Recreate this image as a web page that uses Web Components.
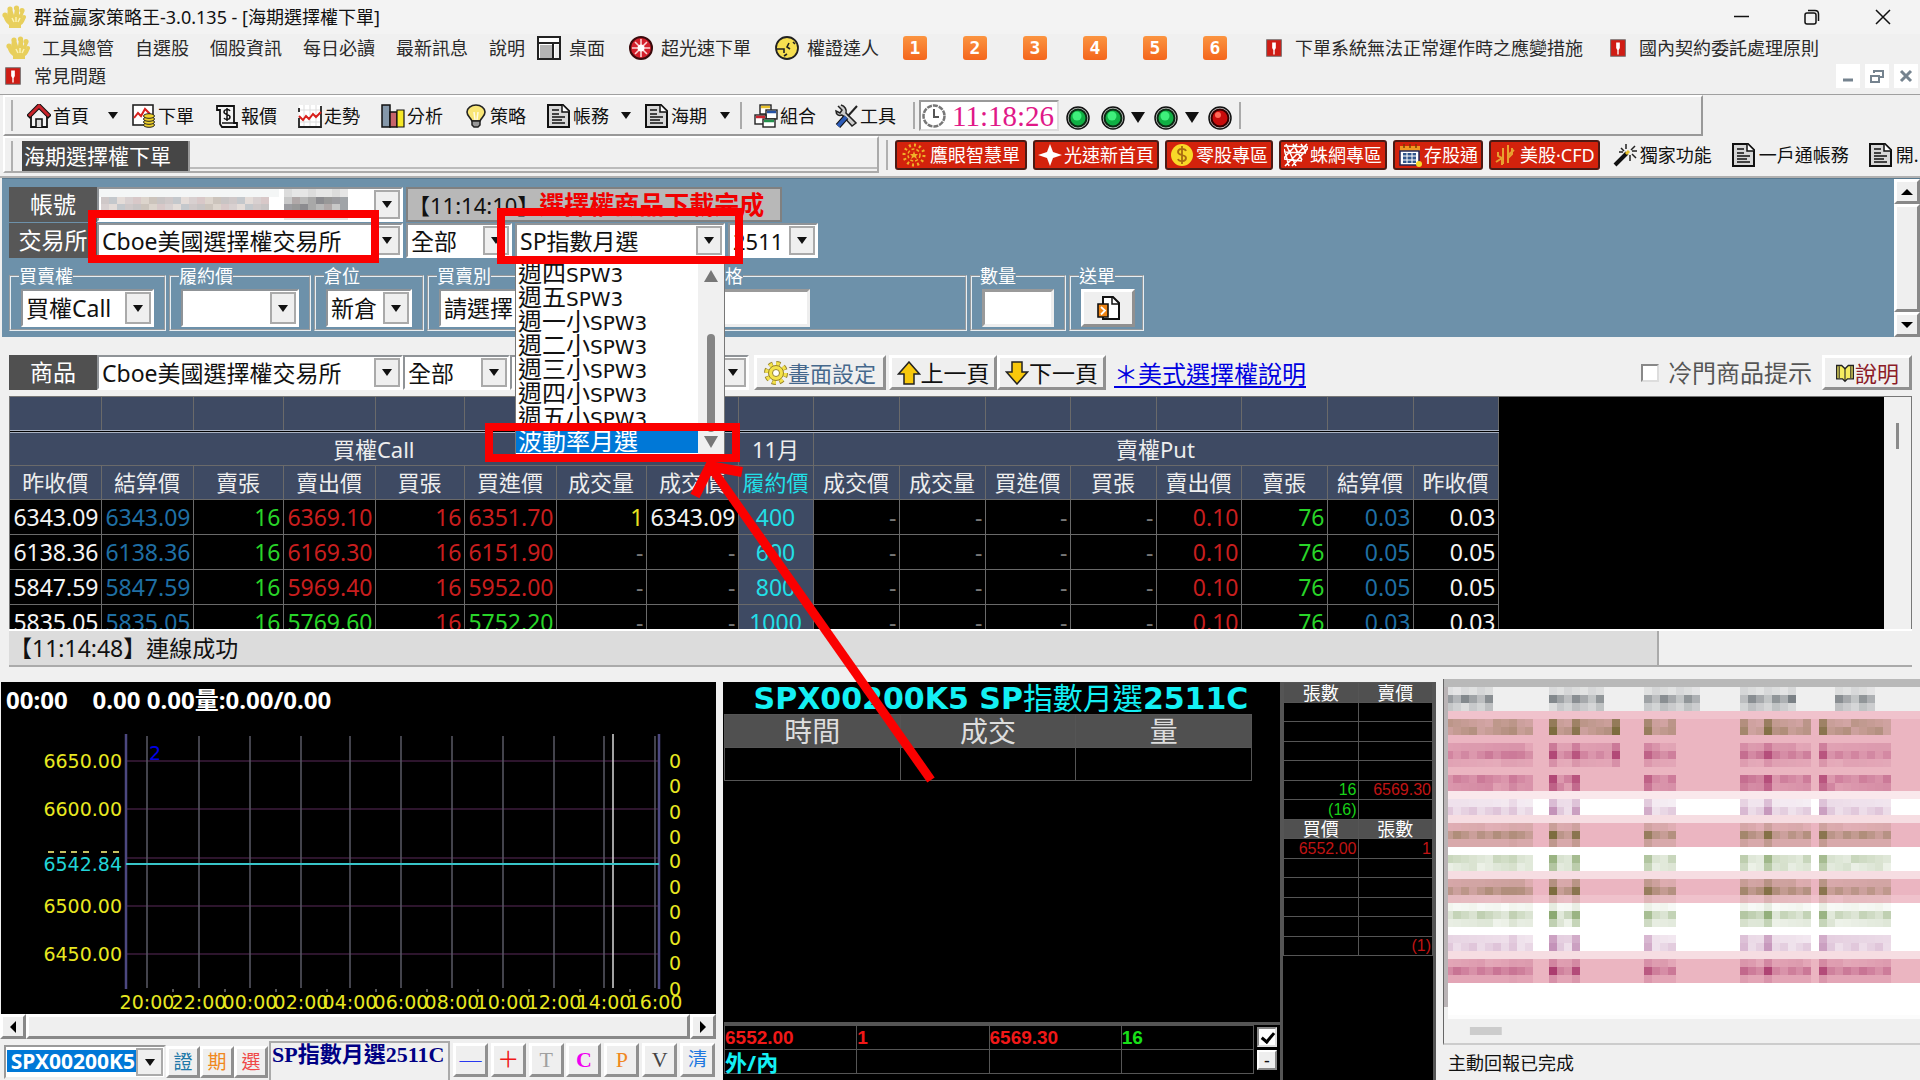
<!DOCTYPE html>
<html lang="zh-Hant">
<head>
<meta charset="utf-8">
<title>群益贏家策略王</title>
<style>
html,body{margin:0;height:100%}
body{background:#f0f0f0;color:#111;font-family:"Noto Sans","Noto Sans CJK TC",sans-serif;font-size:18px;line-height:24px;overflow:hidden}
</style>
</head>
<body>
<trade-app></trade-app>
<script>
const BASE = `*{box-sizing:border-box}button,input,select{font:inherit;color:inherit;margin:0;border-radius:0}button{background:none;border:0;padding:0;line-height:inherit;white-space:nowrap}`;
function define(name, css, html, ready) {
  const t = document.createElement('template');
  t.innerHTML = `<style>${BASE}${css}</style>${typeof html === 'string' ? html : ''}`;
  customElements.define(name, class extends HTMLElement {
    constructor() { super(); this.attachShadow({ mode: 'open' }); }
    connectedCallback() {
      if (this.shadowRoot.firstChild) return;
      this.shadowRoot.append(t.content.cloneNode(true));
      if (typeof html === 'function') this.shadowRoot.innerHTML += html(this);
      if (ready) ready(this, this.shadowRoot);
    }
  });
}

/* ---------- icons ---------- */
const doc = '<path d="M1 1h15l6 6v16H1z" fill="#d8d8d8" stroke="#111" stroke-width="2"/><path d="M15 1v7h7" fill="#fff" stroke="#111" stroke-width="1.5"/><path d="M5 6h7M5 10h7M5 13h13M5 16h10M5 19h13" stroke="#111" stroke-width="1.6"/>';
const crown = '<g fill="#e8cf5c"><circle cx="3" cy="10" r="2.600"/><circle cx="8" cy="4" r="2.600"/><circle cx="14.500" cy="3" r="2.600"/><circle cx="20" cy="5.500" r="2.600"/><circle cx="22" cy="12" r="2"/><path d="M1 10l4 1L6 4h4l2 6 1-7h4l0 7 3-5 2 2-2 6 4-2c-1 5-3 8-5 9H7c-4-3-5-6-6-11zM7 20h12v3H7z"/></g><path d="M10 13l2 4M14 12v5M18 13l-2 4" stroke="#fbf2b4" stroke-width="1.500"/>';
const ICONS = {
  crown,
  desk: '<rect x="1" y="1" width="22" height="22" fill="#fff" stroke="#222" stroke-width="2"/><path d="M1 7h22M16 7v16" stroke="#222" stroke-width="2"/><path d="M3 9h12v13H3z" fill="#b4b4b4"/><path d="M18 9h4v13h-4z" fill="#eee"/>',
  burst: '<circle cx="12" cy="12" r="11" fill="#d3202c" stroke="#3a0a0c" stroke-width="2"/><path d="M12 3v18M3 12h18M6 6l12 12M18 6L6 18" stroke="#fbd5d5" stroke-width="1.600"/><circle cx="12" cy="12" r="3.500" fill="#fff"/>',
  face: '<circle cx="12" cy="12" r="11" fill="#f7df50" stroke="#222" stroke-width="1.800"/><path d="M2 13h7v4M14 7l-2 4 3 2M18 6l2 2M9 20l3-2" stroke="#222" stroke-width="1.600" fill="none"/>',
  flag: '<rect x="4" y="3" width="16" height="18" fill="#d01c14" stroke="#6b6b6b"/><path d="M10 6h4v6l-1 2h-2l-1-2z" fill="#fff"/><path d="M12 12v7" stroke="#fff" stroke-width="1.500"/>',
  home: '<path d="M4 12v11h16V12" fill="#f4f4f4" stroke="#111" stroke-width="1.800"/><path d="M1 13L12 2l11 11" fill="none" stroke="#111" stroke-width="5"/><path d="M2 12L12 2l10 10" fill="none" stroke="#c9242b" stroke-width="3"/><path d="M9 23v-8h6v8" fill="#ddd" stroke="#111" stroke-width="1.600"/>',
  order: '<rect x="1" y="1" width="20" height="20" fill="#fff" stroke="#222" stroke-width="1.600"/><path d="M2 14l4-5 3 3 4-7 5 5" fill="none" stroke="#d8201c" stroke-width="2"/><g fill="#f0d22c" stroke="#222"><ellipse cx="17" cy="21" rx="5.500" ry="2.300"/><ellipse cx="17" cy="18" rx="5.500" ry="2.300"/><ellipse cx="17" cy="15" rx="5.500" ry="2.300"/><ellipse cx="17" cy="12" rx="5.500" ry="2.300"/></g>',
  quote: '<path d="M2 2h17v17h3v4H7l-2-3V6H2z" fill="#f4f4f4" stroke="#111" stroke-width="1.800"/><path d="M7 19h12" stroke="#111" stroke-width="1.500"/><path d="M15 7c-1-2-6-2-6 1s6 2 6 5-5 3-6 1M12 4v13" fill="none" stroke="#111" stroke-width="1.500"/>',
  trend: '<rect x="1" y="1" width="22" height="22" fill="#fff"/><path d="M6 1v22M12 1v22M18 1v22M1 6h22M1 18h22" stroke="#ddd"/><path d="M23 2v21H1V14M1 4v4" fill="none" stroke="#222" stroke-width="1.800"/><path d="M1 12l4 4 3-4 3 3 4-5 3 3 5-5" fill="none" stroke="#d8201c" stroke-width="2"/>',
  bars: '<path d="M1 1h8v22H1z" fill="#8497a9" stroke="#111" stroke-width="1.500"/><path d="M9 8h7v15H9z" fill="#c7646a" stroke="#111" stroke-width="1.500"/><path d="M16 6h7v17h-7z" fill="#f6e828" stroke="#111" stroke-width="1.200"/>',
  bulb: '<path d="M8 17C6 13 3 12 3 8a9 7 0 0 1 18 0c0 4-3 5-5 9z" fill="#f9e676" stroke="#222" stroke-width="1.600"/><path d="M10 8l1 8M14 8l-1 8" stroke="#fffbe0" stroke-width="1.500"/><path d="M8 17h8v4l-2 2h-4l-2-2z" fill="#999" stroke="#222" stroke-width="1.500"/>',
  doc,
  combo: '<g stroke="#222" stroke-width="1.400" fill="#fff"><rect x="6" y="1" width="11" height="9"/><rect x="12" y="6" width="11" height="9"/><rect x="1" y="11" width="11" height="9"/><rect x="9" y="15" width="12" height="8"/></g><path d="M7 3h9" stroke="#e8c22c" stroke-width="2.500"/><path d="M13 8h9" stroke="#2653a5" stroke-width="2.500"/><path d="M2 13h9" stroke="#cc2430" stroke-width="2.500"/><path d="M10 17h10" stroke="#23904c" stroke-width="2.500"/>',
  tools: '<path d="M4 2l4 4-2 3-4-2c0 4 3 5 6 4l10 11 4-3L12 9c1-3-1-7-5-8" fill="#ccc" stroke="#222" stroke-width="1.500"/><path d="M23 2l-9 10" stroke="#222" stroke-width="2"/><path d="M12 13l-8 9" stroke="#111" stroke-width="6"/><path d="M12 13l-8 9" stroke="#2d5cb8" stroke-width="4"/>',
  clock: '<circle cx="12" cy="12" r="10.500" fill="#fff" stroke="#777" stroke-width="2.500" stroke-dasharray="5 1"/><path d="M12 5v8h5" fill="none" stroke="#555" stroke-width="2"/>',
  led: '<circle cx="12" cy="12" r="11" fill="#c8c8c8" stroke="#111" stroke-width="1.500"/><circle cx="12" cy="12" r="8.500" fill="#10b044" stroke="#0b2c14" stroke-width="2"/><circle cx="11" cy="10" r="4.500" fill="#3ff07c"/>',
  ledred: '<circle cx="12" cy="12" r="11" fill="#c8c8c8" stroke="#111" stroke-width="1.500"/><circle cx="12" cy="12" r="8.500" fill="#c80c0c" stroke="#300" stroke-width="2"/><circle cx="10" cy="9" r="3" fill="#ff6a5a"/>',
  wand: '<path d="M2 22L14 10" stroke="#111" stroke-width="4"/><path d="M13 11l3-3" stroke="#e8c22c" stroke-width="3"/><path d="M13 1v5M17 12v6M19 8h5M8 5l3 3M22 3l-4 4M19 11l4 4M6 9h4" stroke="#222" stroke-width="1.500"/>',
  eagle: '<circle cx="12" cy="12" r="10" fill="none" stroke="#f0b028" stroke-width="3" stroke-dasharray="2 3.200"/><circle cx="12" cy="12" r="6" fill="none" stroke="#f0b028" stroke-width="1.500" stroke-dasharray="3 2"/><path d="M12 8l1 3h3l-2 2 1 3-3-2-3 2 1-3-2-2h3z" fill="#f0b028"/>',
  spark: '<path d="M12 1l3 8 9 3-9 3-3 8-3-8-9-3 9-3z" fill="#fff"/>',
  coin: '<circle cx="12" cy="12" r="11" fill="#f8d828"/><path d="M16 8c-1-3-8-3-8 1s8 2 8 6-7 4-8 1M12 3v18" fill="none" stroke="#a86a10" stroke-width="1.800"/>',
  web: '<path d="M0 3l24 1M0 9l22 1M0 16l18 2M1 23L23 1M0 15L13 1M8 23L24 5M2 1l10 22M9 1l9 16M17 1l5 8M0 6l5 17" stroke="#fff" stroke-width="1.600" fill="none"/>',
  save: '<path d="M2 3h20v5H2z" fill="#f09820"/><path d="M6 1v4M12 1v4M18 1v4" stroke="#7c3c04" stroke-width="1.500"/><path d="M2 8h19v14H2z" fill="#fff" stroke="#202858" stroke-width="1.500"/><path d="M5 10h13v10H5z" fill="#30568c"/><path d="M5 13h13M5 17h13M9 10v10M14 10v10" stroke="#fff"/><circle cx="21" cy="21" r="3" fill="#f8d828"/>',
  us: '<g stroke="#e8a030" stroke-width="2" fill="none"><path d="M4 9v4l4 2v7M9 5v16M14 2v18M18 5v6l-4 4"/><path d="M2 19l6-4M14 12l6-5"/></g>',
  gear: '<circle cx="12" cy="12" r="9.500" fill="none" stroke="#98842a" stroke-width="5" stroke-dasharray="4 3.460"/><circle cx="12" cy="12" r="9" fill="none" stroke="#f4e24a" stroke-width="4" stroke-dasharray="3.300 3.770"/><circle cx="12" cy="12" r="7.500" fill="#f4e24a" stroke="#98842a"/><circle cx="12" cy="12" r="3.500" fill="#fff" stroke="#98842a"/>',
  up: '<path d="M12 1L1.500 13H7v10h10V13h5.500z" fill="#f8c80c" stroke="#222" stroke-width="1.500"/>',
  down: '<path d="M12 23L1.500 11H7V1h10v10h5.500z" fill="#f8c80c" stroke="#222" stroke-width="1.500"/>',
  book: '<path d="M12 7L8 3H2v16h7l3 3 3-3h7V3h-6z" fill="#f6ec60" stroke="#222" stroke-width="1.600"/><path d="M12 7v14M5 4v14M19 4v14" stroke="#222" stroke-width="1.300"/>',
  send: '<path d="M7 1h10l6 6v16H7z" fill="#fff" stroke="#111" stroke-width="2"/><path d="M16 1v7h7" fill="none" stroke="#111" stroke-width="1.500"/><path d="M2 8h10v13H2z" fill="#ee8414" stroke="#111" stroke-width="1.600"/><path d="M5 11l4 3.500-4 4" fill="none" stroke="#fff" stroke-width="1.800"/>'
};
define('tool-icon', ':host{display:inline-block;width:24px;height:24px;flex:none}svg{display:block;width:100%;height:100%}',
  h => `<svg viewBox="0 0 24 24" aria-hidden="true">${ICONS[h.getAttribute('name')]}</svg>`);
define('drop-mark', ':host{display:block;flex:none;width:0;height:0;border:5px solid transparent;border-top:7px solid #111;border-bottom:0}:host([big]){border-width:7px;border-top-width:11px;border-bottom:0}', '<slot></slot>');

/* ---------- basic controls ---------- */
define('combo-box', `:host{display:block;position:relative;flex:none;height:35px;background:#fff;border:2px solid #8f9397;border-right-color:#fff;border-bottom-color:#fff}
 select{display:block;appearance:none;width:100%;height:100%;border:0;background:none;padding:0 0 0 3px;font-size:var(--fs,23px);line-height:28px;outline:0;white-space:nowrap}
 i{position:absolute;right:1px;top:1px;bottom:1px;width:26px;background:#efefef;border:2px solid #aaa;display:flex;align-items:center;justify-content:center;pointer-events:none}`,
  h => `<select aria-label="${h.getAttribute('label')}"><option>${h.getAttribute('value') || ''}</option></select><i><drop-mark></drop-mark></i><slot></slot>`);
define('field-group', `:host{display:block;flex:none}fieldset{margin:0;min-width:0;height:65px;padding:0 10px;border:2px groove #e8eef2}
 legend{margin-left:-2px;padding:0;font-size:18px;line-height:20px;height:20px;color:#fff}div{padding-top:3px;height:41px;display:flex}::slotted(combo-box){width:100%;height:38px}`,
  h => `<fieldset><legend>${h.getAttribute('legend')}</legend><div><slot></slot></div></fieldset>`);
define('num-input', ':host{display:block}input{display:block;width:100%;height:38px;background:#fff;border:3px solid;border-color:#9a9a9a #eee #eee #9a9a9a;outline:0}',
  h => `<input type="text" aria-label="${h.getAttribute('label')}">`);
define('push-button', `:host{display:block;flex:none;height:35px}button{width:100%;height:100%;display:flex;align-items:center;justify-content:center;background:#efefef;border:3px solid;border-color:#fff #909090 #909090 #fff;font-size:var(--fs,23px);line-height:28px}`,
  '<button type="button"><slot></slot></button>');
define('scroll-bar', `:host{display:flex;flex-direction:column;width:25px;background:#efefef}:host([horizontal]){flex-direction:row;width:auto;height:25px}
 button,span{flex:none;display:flex;align-items:center;justify-content:center;background:#efefef;border:3px solid;border-color:#fff #888 #888 #fff;min-width:26px;min-height:25px}
 span{flex:1}svg{width:12px;height:12px}`,
  h => { const z = h.hasAttribute('horizontal');
    return `<button aria-label="往前"><svg viewBox="0 0 12 12"><path d="${z ? 'M9 0v12L3 6z' : 'M0 9h12L6 3z'}"/></svg></button><span></span><button aria-label="往後"><svg viewBox="0 0 12 12"><path d="${z ? 'M3 0v12l6-6z' : 'M0 3h12L6 9z'}"/></svg></button>`; });

/* ---------- window title and menu ---------- */
define('title-bar', `:host{display:flex;align-items:center;height:34px;background:#f3f3f3;padding:0 28px 0 2px;gap:8px}span{flex:1;line-height:28px}
 nav{display:flex;gap:53px}nav svg{width:18px;height:18px;display:block;fill:none;stroke:#111;stroke-width:1.500}`,
  `<tool-icon name="crown"></tool-icon><span>群益贏家策略王-3.0.135 - [海期選擇權下單]</span>
 <nav><button aria-label="最小化"><svg viewBox="0 0 18 18"><path d="M2 8.500h15"/></svg></button><button aria-label="還原"><svg viewBox="0 0 18 18"><rect x="2" y="5" width="11" height="11" rx="2"/><path d="M5 2.500h7q3.500 0 3.500 3.500v7"/></svg></button><button aria-label="關閉"><svg viewBox="0 0 18 18"><path d="M2 2l14 14M16 2L2 16"/></svg></button></nav>`);
define('menu-bar', `:host{display:block;height:60px;color:#2a2a2a}.r{display:flex;align-items:center;height:28px;padding-left:6px}.m{display:flex;gap:21px;margin-left:12px}
 .i{display:flex;align-items:center;gap:8px;margin-left:24px}.n{display:flex;gap:36px;margin-left:24px}.n button{width:24px;height:24px;border-radius:3px;background:linear-gradient(#fb9440,#f4661c);color:#fff;font:bold 18px/24px "DejaVu Sans Mono",monospace}
 .f{gap:10px}.f tool-icon{width:22px;height:24px}.w{display:flex;gap:5px;margin-left:auto;padding-right:2px}.w button{width:24px;height:24px;background:#fff}.w svg{width:16px;height:16px;display:block;margin:4px auto;fill:none;stroke:#75838f;stroke-width:3}`,
  () => `<div class="r"><tool-icon name="crown"></tool-icon><div class="m">${['工具總管','自選股','個股資訊','每日必讀','最新訊息','說明'].map(x => `<button>${x}</button>`).join('')}</div>
 <button class="i" style="margin-left:12px"><tool-icon name="desk"></tool-icon>桌面</button><button class="i"><tool-icon name="burst"></tool-icon>超光速下單</button><button class="i"><tool-icon name="face"></tool-icon>權證達人</button>
 <div class="n">${[1,2,3,4,5,6].map(x => `<button>${x}</button>`).join('')}</div>
 <button class="i f" style="margin-left:36px"><tool-icon name="flag"></tool-icon>下單系統無法正常運作時之應變措施</button><button class="i f"><tool-icon name="flag"></tool-icon>國內契約委託處理原則</button></div>
 <div class="r" style="padding-left:2px"><button class="i f" style="margin-left:0"><tool-icon name="flag"></tool-icon>常見問題</button>
 <div class="w"><button aria-label="縮小"><svg viewBox="0 0 16 16"><path d="M3 12h10"/></svg></button><button aria-label="還原視窗"><svg viewBox="0 0 16 16"><path d="M2 8h8v6H2zM5 5V3h9v6h-3" stroke-width="2"/></svg></button><button aria-label="關閉視窗"><svg viewBox="0 0 16 16"><path d="M3 3l10 10M13 3L3 13"/></svg></button></div></div>`);

/* ---------- tool bars ---------- */
const tb = (ic, t) => `<button class="b"><tool-icon name="${ic}"></tool-icon>${t}</button>`;
define('tool-bar', `:host{display:flex;border-top:1px solid #a0a0a0;height:42px}.x{display:flex;align-items:center;width:1700px;margin-left:3px;border:2px solid;border-color:#fff #999 #999 #fff;padding-left:6px}
 .h{width:2px;height:31px;margin-right:14px;background:#b0b0b0}.b{display:flex;align-items:center;gap:2px;margin-right:21px}.s{width:2px;height:27px;background:#aaa;flex:none}drop-mark{margin-right:14px}
 .c{display:flex;align-items:center;gap:6px;width:140px;height:31px;margin:0 6px 0 4px;padding-left:1px;background:#fff;border:2px solid;border-color:#999 #ddd #ddd #999;color:#e01888;font:29px/28px "Liberation Serif",serif}
 .l{display:flex;align-items:center;gap:10px;margin:4px 6px 0 1px}.l drop-mark{margin:0}.l tool-icon{margin-right:1px}`,
  () => `<div class="x"><span class="h"></span>${tb('home','首頁').replace('"b"','"b" style="margin-right:19px"')}<drop-mark></drop-mark>${tb('order','下單')}${tb('quote','報價')}${tb('trend','走勢')}${tb('bars','分析')}${tb('bulb','策略')}
 ${tb('doc','帳務').replace('"b"','"b" style="margin-right:12px"')}<drop-mark></drop-mark>${tb('doc','海期').replace('"b"','"b" style="margin-right:13px"')}<drop-mark style="margin-right:10px"></drop-mark><span class="s" style="margin-right:12px"></span>${tb('combo','組合').replace('"b"','"b" style="margin-right:18px"')}${tb('tools','工具').replace('"b"','"b" style="margin-right:17px"')}<span class="s"></span>
 <div class="c"><tool-icon name="clock"></tool-icon><time>11:18:26</time></div><div class="l"><tool-icon name="led"></tool-icon><tool-icon name="led"></tool-icon><drop-mark big style="margin-left:-5px"></drop-mark><tool-icon name="led" style="margin-left:-1px"></tool-icon><drop-mark big style="margin-left:-4px"></drop-mark><tool-icon name="ledred" style="margin-left:-1px"></tool-icon></div><span class="s"></span></div>`);
define('tab-strip', `:host{display:flex;height:42px;border-bottom:2px solid #b0b0b0;padding-bottom:3px}.t{width:876px;flex:none;margin-left:3px;padding:3px 0 0 6px;border:2px solid;border-color:#fff #aaa #aaa #fff;display:flex;align-items:flex-start}
 .t i,.q i{width:2px;height:30px;background:#b0b0b0;flex:none;margin-right:9px}.t button{background:#464646;color:#fff;font-size:21px;line-height:28px;height:30px;width:168px;text-align:left;padding-left:2px;border-right:2px solid #999}.t span{flex:1;height:28px;border-bottom:2px solid #bbb}
 .q{display:flex;align-items:center;gap:6px;padding-left:7px;white-space:nowrap}.q i{margin-right:1px}.red{display:flex;align-items:center;gap:2px;height:30px;padding:0 3px;background:#d3220c;border:2px solid #4c1a14;border-radius:3px;color:#fff}.red:first-of-type{padding:0 5px;gap:4px}
 .p{display:flex;align-items:center;gap:3px;margin:0 7px}`,
  () => `<div class="t"><i></i><button>海期選擇權下單</button><span></span></div><div class="q"><i></i>${[['eagle','鷹眼智慧單'],['spark','光速新首頁'],['coin','零股專區'],['web','蛛網專區'],['save','存股通'],['us','美股·CFD']].map(a => `<button class="red"><tool-icon name="${a[0]}"></tool-icon>${a[1]}</button>`).join('')}
 ${[['wand','獨家功能'],['doc','一戶通帳務'],['doc','開.']].map(a => `<button class="p"><tool-icon name="${a[0]}"></tool-icon>${a[1]}</button>`).join('')}</div>`);

/* ---------- open drop-down list ---------- */
define('open-list', `:host{display:flex;position:absolute;z-index:3;left:-2px;top:33px;width:210px;height:197px;overflow:hidden;background:#fff;border:1px solid #777;border-top:0}
 ul{flex:1;margin:0;padding:3px 0 0;list-style:none;font-size:24px;line-height:24px}li{padding-left:2px;height:24px;white-space:nowrap}li span{font:20px/24px "DejaVu Sans",sans-serif}li[aria-selected]{background:#0078d7;color:#fff}
 .s{width:26px;background:#f0f0f0;position:relative;display:flex;flex-direction:column;justify-content:space-between;align-items:center;padding:12px 0 6px}.s svg{width:14px;height:12px;fill:#777}.s b{width:8px;flex:1;margin:52px 0 4px;background:#858585;border-radius:4px}`,
  () => `<ul role="listbox" aria-label="商品清單">${['週四','週五','週一小','週二小','週三小','週四小','週五小'].map(x => `<li role="option">${x}<span>SPW3</span></li>`).join('')}<li role="option" aria-selected="true">波動率月選</li></ul>
 <div class="s"><svg viewBox="0 0 14 12"><path d="M0 12L7 0l7 12z"/></svg><b></b><svg viewBox="0 0 14 12"><path d="M0 0l7 12 7-12z"/></svg></div>`);

/* ---------- order entry ---------- */
define('account-mask', ':host{display:block;position:absolute;left:0;top:0;right:28px;bottom:0;background:#fff}svg{display:block}', h => {
  const c = ['#d8d0d0','#cfc8c8','#dcd4cc','#e4dcd8','#c8c4c4','#d8c8c8','#c4c8cc','#ccc4bc'], d = ['#c8c8c8','#a8a8a8','#9c9ca0','#b0a8a8','#8c8c90','#a0a4a8','#b8b8b8','#989898'];
  let s = '<rect x="0" y="0" width="180" height="8" fill="#f4f6f6"/>';
  for (let i = 0; i < 21; i++) s += `<rect x="${2 + i * 8}" y="8" width="8" height="7" fill="${c[(i * 5 + 1) % 8]}"/><rect x="${2 + i * 8}" y="15" width="8" height="6" fill="${c[(i * 3) % 8]}"/>`;
  for (let i = 0; i < 8; i++) s += `<rect x="${185 + i * 8}" y="0" width="8" height="8" fill="#dcdcdc" opacity="${i % 3 ? .7 : 1}"/><rect x="${185 + i * 8}" y="8" width="8" height="7" fill="${d[(i * 3) % 8]}"/><rect x="${185 + i * 8}" y="15" width="8" height="8" fill="${d[(i * 5 + 2) % 8]}"/><rect x="${185 + i * 8}" y="23" width="8" height="8" fill="#e4e4e4"/>`;
  return `<svg width="270" height="31">${s}</svg>`; });
define('order-panel', `:host{display:flex;background:#6d91aa;margin-left:2px;border-top:1px solid #58798f}.m{flex:1;padding:8px 0 6px 7px;min-width:0}.r{display:flex;gap:3px;margin-bottom:1px}.r .l{width:88px;margin-right:-3px}
 .l{background:#575757;color:#fff;font-size:23px;line-height:34px;height:35px;text-align:center;flex:none}
 output{width:376px;height:35px;background:#b8b8b8;border:2px solid #808080;font-size:22px;line-height:31px;white-space:nowrap;overflow:hidden}output b{color:#f00000;font-size:25px}
 .g{display:flex;gap:3px;margin-top:8px}push-button{width:54px;height:38px}scroll-bar{margin-right:1px}`,
  `<div class="m"><div class="r"><span class="l">帳號</span><combo-box label="帳號" style="width:306px"><account-mask></account-mask></combo-box><output>【11:14:10】<b>選擇權商品下載完成</b></output></div>
 <div class="r"><span class="l">交易所</span><combo-box label="交易所" value="Cboe美國選擇權交易所" style="width:306px"></combo-box><combo-box label="類別" value="全部" style="width:106px"></combo-box><combo-box label="商品" value="SP指數月選" style="width:210px"><open-list></open-list></combo-box><combo-box label="月份" value="2511" style="width:90px;--fs:22px"></combo-box></div>
 <div class="g"><field-group legend="買賣權" style="width:157px"><combo-box label="買賣權" value="買權Call"></combo-box></field-group><field-group legend="履約價" style="width:142px"><combo-box label="履約價"></combo-box></field-group><field-group legend="倉位" style="width:110px"><combo-box label="倉位" value="新倉"></combo-box></field-group><field-group legend="買賣別" style="width:267px"><combo-box label="買賣別" value="請選擇"></combo-box></field-group><field-group legend="價格" style="width:270px"><num-input label="價格" style="width:101px"></num-input></field-group><field-group legend="數量" style="width:96px"><num-input label="數量"></num-input></field-group><field-group legend="送單" style="width:75px"><push-button><tool-icon name="send"></tool-icon></push-button></field-group></div></div>
 <scroll-bar></scroll-bar>`);

define('product-bar', `:host{display:flex;align-items:center;margin:18px 8px 6px 9px;height:35px}.l{width:88px;height:35px;background:#505050;color:#fff;font-size:23px;line-height:34px;text-align:center}
 a{margin-left:8px;color:#0000e0;font-size:24px;line-height:32px;text-underline-offset:3px;padding-top:2px}label{margin-left:auto;margin-right:10px;display:flex;align-items:center;gap:9px;font-size:24px;line-height:32px;color:#555}
 input{appearance:none;width:18px;height:18px;background:#fff;border:2px solid;border-color:#888 #ddd #ddd #888}`,
  `<span class="l">商品</span><combo-box label="交易所" value="Cboe美國選擇權交易所" style="width:306px"></combo-box><combo-box label="類別" value="全部" style="width:107px"></combo-box><combo-box label="商品" value="SP指數月選" style="width:239px"></combo-box>
 <push-button style="width:132px;margin-left:5px;color:#46688c;--fs:22px"><tool-icon name="gear"></tool-icon>畫面設定</push-button><push-button style="width:108px;margin-left:3px"><tool-icon name="up"></tool-icon>上一頁</push-button><push-button style="width:109px"><tool-icon name="down"></tool-icon>下一頁</push-button>
 <a href="#help">＊美式選擇權說明</a><label><input type="checkbox">冷門商品提示</label><push-button style="width:90px;color:#8c1c28;--fs:22px"><tool-icon name="book" style="width:20px"></tool-icon>說明</push-button>`);

/* ---------- option chain ---------- */
define('option-chain', `:host{display:flex;margin:0 8px 0 9px;height:233px;overflow:hidden;background:#000;border:1px solid #777;border-bottom:0}.k{flex:1;min-width:0;overflow:hidden}
 table{border-collapse:collapse;table-layout:fixed;width:1487px}th,td{border:1px solid #6a6a6a;padding:0 2px;height:35px;font-size:23px;line-height:30px;font-weight:400;text-align:right;overflow:hidden;white-space:nowrap}
 th{background:#3e4a63;color:#eee;text-align:center;font-size:22px;height:34px;padding:0}tr.z th{border-bottom:3px double #a8b0c0;border-top:0}.c{color:#22dfe6}td.c{background:#3e4a63;text-align:center}
 .w{color:#f4f4f4}.b{color:#1f6fa4}.g{color:#28d428}.r{color:#c81e1e}.y{color:#e8e020}.d{color:#777}tr :first-child{border-left:0}
 .v{width:27px;background:#f0f0f0;display:flex;justify-content:center;padding-top:26px}.v i{width:3px;height:26px;background:#8a8a8a}`,
  () => {
    const w = [91,92,90,92,89,92,90,92,75,86,86,85,86,85,86,86,85], H = ['昨收價','結算價','賣張','賣出價','買張','買進價','成交量','成交價','履約價','成交價','成交量','買進價','買張','賣出價','賣張','結算價','昨收價'];
    const R = [['6343.09','6369.10','6351.70','1','6343.09','400','0.03'],['6138.36','6169.30','6151.90','-','-','600','0.05'],['5847.59','5969.40','5952.00','-','-','800','0.05'],['5835.05','5769.60','5752.20','-','-','1000','0.03']];
    const td = (c, v) => `<td class="${v === '-' ? 'd' : c}">${v}</td>`;
    return `<div class="k"><table><colgroup>${w.map(x => `<col style="width:${x}px">`).join('')}</colgroup><tr class="z">${w.map(() => '<th></th>').join('')}</tr>
 <tr><th colspan="8">買權Call</th><th>11月</th><th colspan="8">賣權Put</th></tr><tr>${H.map((x, i) => `<th${i === 8 ? ' class="c"' : ''}>${x}</th>`).join('')}</tr>
 ${R.map((r, i) => { const p = i === 3 ? 'g' : 'r'; return `<tr>${td('w',r[0])}${td('b',r[0])}${td('g','16')}${td(p,r[1])}${td('r','16')}${td(p,r[2])}${td('y',r[3])}${td('w',r[4])}${td('c',r[5])}${td('d','-').repeat(4)}${td('r','0.10')}${td('g','76')}${td('b',r[6])}${td('w',r[6])}</tr>`; }).join('')}</table></div><div class="v"><i></i></div>`; });
define('status-line', `:host{display:flex;margin:0 8px 15px 9px;height:38px;border-top:2px solid #fff;border-bottom:2px solid #aaa}div{width:1650px;flex:none;background:#dcdcdc;border-right:2px solid #aaa;font-size:23px;line-height:34px}`, '<div><slot></slot></div>');

/* ---------- chart ---------- */
define('price-chart', `:host{display:flex;flex-direction:column;width:716px}.p{background:#000;height:332px;margin-left:1px}.h{height:36px;padding-left:5px;color:#fff;font-weight:700;font-size:24px;line-height:36px;white-space:pre}svg{display:block}
 text{font:19px "DejaVu Sans",sans-serif;fill:#e8e820}.e{text-anchor:end}.m{text-anchor:middle}
 .b{display:flex;align-items:flex-start;padding:2px 1px 0 4px}.cb{display:flex;width:162px;height:34px;border:2px solid;border-color:#999 #eee #eee #999;background:#fff;padding:1px;margin-top:4px}
 .cb input{flex:1;min-width:0;border:0;padding:0 1px;margin:2px 0 4px;background:#0078d7;color:#fff;font-size:21px;font-weight:700;text-align:right;line-height:24px;direction:rtl;outline:0}.cb button{width:27px;background:#efefef;border:2px solid #aaa;display:flex;align-items:center;justify-content:center}
 .k{width:34px;height:32px;margin-top:5px;--fs:19px}.n{width:181px;height:40px;margin-left:1px;border:2px solid #aaa;border-bottom:0;padding-left:1px;color:#000084;font:bold 22px/24px "Liberation Serif","Noto Sans CJK TC",serif;white-space:nowrap;overflow:hidden;flex:none}
 .u{display:flex;justify-content:space-between;flex:1;margin:2px 0 0 3px}.u push-button{width:35px;height:34px;font-family:"Liberation Serif","Noto Sans CJK TC",serif;--fs:22px}`,
  () => {
    const X = [147,199,250,301,350,401,452,503,554,604,655], T = [20,22,0,2,4,6,8,10,12,14,16];
    let s = '';
    [761,809,858,906,954].forEach(y => s += `<path d="M127 ${y}H659" stroke="#3c1c3c" stroke-width="1.500"/>`);
    X.forEach((x, i) => { s += `<path d="M${x} 736V988" stroke="#5a5a66" stroke-width="1.500"/><text class="m" x="${x}" y="1009">${String(T[i]).padStart(2, '0')}:00</text>`; if (i < 10) s += `<path d="M${x + 26} 989v3" stroke="#aaa"/>`; });
    [761,786,812,837,861,887,912,938,963,989].forEach(y => s += `<text class="m" x="675" y="${y + 7}">0</text>`);
    [['6650.00',761],['6600.00',809],['6500.00',906],['6450.00',954]].forEach(a => s += `<text class="e" x="122" y="${a[1] + 7}">${a[0]}</text>`);
    [48,60,71,83,101,113].forEach(x => s += `<path d="M${x} 852h6" stroke="#c8c060" stroke-width="2"/>`);
    return `<div class="p"><div class="h">00:00    0.00 0.00量:0.00/0.00</div><svg width="715" height="296" viewBox="1 718 715 296">${s}<path d="M126 734V989M659 734V989" stroke="#4c4880" stroke-width="2.500"/><path d="M613 734V988" stroke="#d8d8d8" stroke-width="1.500"/><path d="M126 864H659" stroke="#38c4c8" stroke-width="2"/><text class="e" x="122" y="871" style="fill:#22d4d8">6542.84</text><text class="m" x="155" y="760" style="fill:#0000e8">2</text></svg></div>
 <scroll-bar horizontal></scroll-bar><div class="b"><div class="cb"><input type="text" aria-label="商品代號" value="SPX00200K5"><button aria-label="展開"><drop-mark></drop-mark></button></div>
 ${[['證','#2078a8'],['期','#f08820'],['選','#f04848']].map(a => `<push-button class="k" style="color:${a[1]}">${a[0]}</push-button>`).join('')}<div class="n">SP指數月選2511C</div>
 <div class="u">${[['—','#2838f0'],['＋','#f01818'],['T','#a0a0a0'],['C','#f000f0;font-weight:700'],['P','#f08820'],['V','#444'],['清','#2078e0;--fs:19px']].map(a => `<push-button style="color:${a[1]}">${a[0]}</push-button>`).join('')}</div></div>`; });

/* ---------- ticks ---------- */
define('trade-list', `:host{display:flex;flex-direction:column;background:#000;width:560px;border-right:3px solid #555;padding-left:1px}h2{margin:0;font:bold 30px/34px "DejaVu Sans","Noto Sans CJK TC",sans-serif;color:#14f0f4;text-align:center;white-space:nowrap;height:32px;padding-right:2px}h2 span{font-weight:400}
 table{border-collapse:collapse;table-layout:fixed}th,td{border:1px solid #555;padding:0}.t{width:528px}.t th{background:#505050;color:#ddd;font-size:28px;line-height:32px;font-weight:400;height:33px}.t td{height:33px}.f{display:flex;margin-top:auto;border-top:3px solid #555;padding-bottom:7px}
 .q{width:530px}.q td{height:24px;font:bold 19px/22px "Liberation Sans",sans-serif;color:#f01818}.q .g{color:#18e018}.q .c{color:#14f0f4;font:bold 22px/22px "Noto Sans","Noto Sans CJK TC",sans-serif}
 .s{flex:1;display:flex;flex-direction:column;align-items:center;gap:3px;padding:2px 0 0}.s input{appearance:none;width:20px;height:20px;background:#fff;border:2px solid;border-color:#888 #ddd #ddd #888;position:relative}.s input:checked::after{content:"";position:absolute;left:5px;top:1px;width:5px;height:10px;border:solid #000;border-width:0 3px 3px 0;transform:rotate(40deg)}.s button{width:20px;height:20px;background:#eee;border:2px solid;border-color:#fff #888 #888 #fff;line-height:14px}`,
  `<h2>SPX00200K5 SP<span>指數月選</span>2511C</h2><table class="t"><tr><th>時間</th><th>成交</th><th>量</th></tr><tr><td></td><td></td><td></td></tr></table>
 <div class="f"><table class="q"><tr><td>6552.00</td><td>1</td><td>6569.30</td><td class="g">16</td></tr><tr><td class="c">外/內</td><td></td><td></td><td></td></tr></table><div class="s"><input type="checkbox" checked aria-label="顯示"><button>-</button></div></div>`);
define('depth-book', `:host{display:block;background:#000;width:153px;border-right:3px solid #555}table{border-collapse:collapse;table-layout:fixed;width:150px;height:274px}th,td{border:1px solid #555;padding:0 1px;text-align:right;font:16px/17px "Liberation Sans",sans-serif;height:19px;overflow:hidden}th{background:#505050;color:#fff;text-align:center;font:18px/17px "Noto Sans CJK TC",sans-serif}td{color:#c01414}.g{color:#18d018}`,
  () => { const r = (a, b, c = '', t = 'td') => `<tr><${t} class="${c}">${a}</${t}><${t}>${b}</${t}></tr>`;
    return `<table>${r('張數','賣價','','th')}${r('','').repeat(4)}${r('16','6569.30','g')}${r('(16)','','g')}${r('買價','張數','','th')}${r('6552.00','1')}${r('','').repeat(4)}${r('','(1)')}</table>`; });

/* ---------- report list, censored as 8px blocks ---------- */
define('report-list', `:host{display:flex;flex-direction:column;flex:1;min-width:0}.f{margin-top:-3px;border-left:1px solid #666;border-bottom:2px solid #ccc;height:366px}svg{display:block;width:100%;height:340px}p{margin:5px 0 0 5px;line-height:26px}`,
  () => {
    const bg = {P:'#ebb5c1',L:'#f0c2cc',F:'#fae8ec',W:'#fff',G:'#f6dde2'}, rows = 'HHHLPPPPPPPPPFWWGPPPWWWGPPLWWWWWWGPPPWWWWF';
    const B = '#6a6028', M = '#a02860', V = '#a86098', G = '#6a9048';
    const ink = {4:[B,.8],5:[B,1],7:[M,.5],8:[M,.9],9:[M,.3],11:[M,.9],12:[M,.7],14:[V,.5],15:[V,.8],17:[B,.3],18:[B,1],19:[B,.4],21:[G,.8],22:[G,.6],24:[B,.5],25:[B,1],26:[B,.2],27:[G,.2],28:[G,.9],29:[G,.5],31:[V,.7],32:[V,.8],34:[M,.4],35:[M,1],36:[M,.3]};
    const hot = {12:.85,15:.75,20:.85,24:.65,36:.55,39:.8,46:.75,7:.45};
    const span = [[-1,9],[12,15],[24,27],[36,44],[46,54]];
    let s = '<rect x="0" y="0" width="478" height="8" fill="#b9b9b9"/>';
    [...rows].forEach((c, k) => {
      const y = 8 + k * 8;
      s += `<rect x="4" y="${y}" width="474" height="8" fill="${c === 'H' ? '#efefef' : k === 41 ? '#fcfcfc' : bg[c]}"/>`;
      if (ink[k]) span.forEach(([a, b], g) => { if (g === 1 && k < 10) b = 20;
        for (let n = a; n <= b; n++) { const q = ((n * 37 + 40 + k * 61 + n * k * 7 + 357) % 17) / 17; s += `<rect x="${9 + n * 8}" y="${y}" width="8" height="8" fill="${ink[k][0]}" opacity="${((hot[n] || .22 + .26 * q) * ink[k][1]).toFixed(2)}"/>`; } });
    });
    [[-1,4],[12,18],[24,30],[36,42],[48,52]].forEach(([a, b]) => { for (let n = a; n <= b; n++) [.15,.7,.3].forEach((o, k) => { const q = ((n * 29 + 55 + k * 13) % 11) / 11; s += `<rect x="${9 + n * 8}" y="${8 + k * 8}" width="8" height="8" fill="#50585e" opacity="${(o * (.4 + .7 * q)).toFixed(2)}"/>`; }); });
    s += '<rect x="0" y="8" width="4" height="320" fill="#bab4b6"/>';
    return `<div class="f"><svg viewBox="0 0 478 340" preserveAspectRatio="none" shape-rendering="crispEdges">${s}</svg><svg style="height:20px" viewBox="0 0 478 20" preserveAspectRatio="none"><path d="M26 12h32" stroke="#ccc" stroke-width="8"/></svg></div><p>主動回報已完成</p>`; });

/* ---------- red marks over the screen ---------- */
define('callout-layer', ':host{position:absolute;left:0;top:0;z-index:9;pointer-events:none}svg{display:block}',
  `<svg width="1000" height="800" fill="none" stroke="#fb0000" stroke-width="8"><rect x="92" y="214" width="283" height="45"/><rect x="501" y="212" width="238" height="48"/><rect x="489" y="427" width="247" height="31"/><path d="M931 780L710 466" stroke-width="9"/><path d="M695 496L710 466l32 6" stroke-width="10"/></svg>`);

define('trade-app', ':host{display:flex;flex-direction:column;min-height:100vh;position:relative}.b{display:flex;flex:1;gap:7px}.c{display:flex}', `
<title-bar></title-bar><menu-bar></menu-bar><tool-bar></tool-bar><tab-strip></tab-strip>
<order-panel></order-panel><product-bar></product-bar><option-chain></option-chain><status-line>【11:14:48】連線成功</status-line>
<div class="b"><price-chart></price-chart><div class="c"><trade-list></trade-list><depth-book></depth-book></div><report-list></report-list></div>
<callout-layer></callout-layer>`);
</script>
</body>
</html>
